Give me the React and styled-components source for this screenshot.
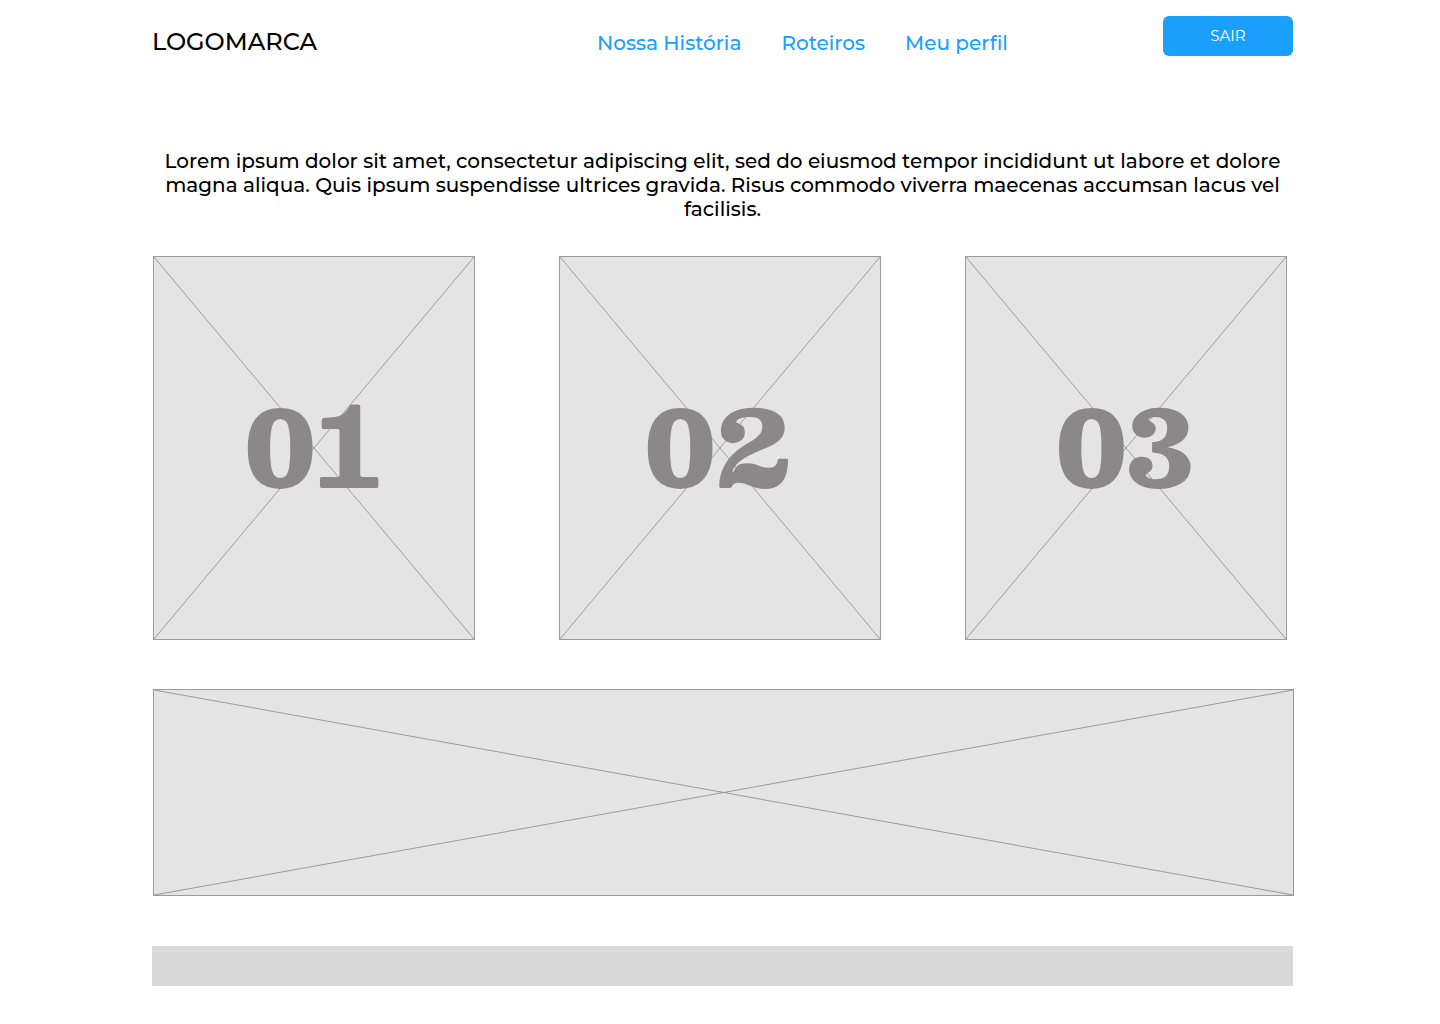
import React from "react";
import styled, { createGlobalStyle } from "styled-components";

const GlobalStyle = createGlobalStyle`
  *, *::before, *::after { box-sizing: border-box; }
  body {
    margin: 0;
    background: #ffffff;
    color: #000000;
    font-family: Montserrat, Inter, "Open Sans", sans-serif;
  }
`;

const Page = styled.div`
  min-height: 100vh;
  padding: 16px 147px 38px 152px;
`;

const Header = styled.header`
  display: grid;
  grid-template-columns: 445px 1fr 130px;
  align-items: start;
`;

const Logo = styled.a`
  padding-top: 10px;
  color: #000000;
  font-size: 24px;
  font-weight: 500;
  line-height: 32px;
  text-decoration: none;
`;

const Nav = styled.nav`
  display: flex;
  gap: 40px;
  padding-top: 15px;
`;

const NavLink = styled.a`
  color: #1aa0fc;
  font-size: 20px;
  font-weight: 500;
  line-height: 24px;
  text-decoration: none;
  white-space: nowrap;
`;

const Button = styled.button`
  height: 40px;
  padding: 0 0 2px;
  border: 0;
  border-radius: 6px;
  background: #1aa0fc;
  color: #ffffff;
  font-family: inherit;
  font-size: 15px;
  cursor: pointer;
`;

const Intro = styled.p`
  margin: 91px 0 35px;
  padding: 0 8px;
  font-size: 20px;
  font-weight: 500;
  line-height: 24px;
  text-align: center;
`;

const Cards = styled.section`
  display: grid;
  grid-template-columns: repeat(3, 1fr);
  gap: 84px;
  padding: 0 6px 0 1px;
`;

const Frame = styled.div`
  display: grid;
  place-items: center;
  height: ${({ $height }) => $height}px;
  border: 1px solid #9c9c9c;
  background: #e4e4e4;
`;

const Cross = styled.svg`
  grid-area: 1 / 1;
  width: 100%;
  height: 100%;
  min-height: 0;
  stroke: #9c9c9c;
`;

const Number = styled.span`
  grid-area: 1 / 1;
  z-index: 1;
  padding: 0 4px 8px 0;
  color: #8b8889;
  font-family: Besley, "DejaVu Serif", serif;
  font-size: 106px;
  font-weight: 900;
  line-height: 1;
`;

const Banner = styled.section`
  margin: 49px -1px 50px 1px;
`;

const Footer = styled.footer`
  height: 40px;
  background: #d9d9d9;
`;

function Placeholder({ height, children }) {
  return (
    <Frame $height={height}>
      <Cross viewBox="0 0 100 100" preserveAspectRatio="none" aria-hidden="true">
        <path d="M0 0 100 100M100 0 0 100" vectorEffect="non-scaling-stroke" />
      </Cross>
      {children}
    </Frame>
  );
}

export default function App() {
  return (
    <>
      <GlobalStyle />
      <Page>
        <Header>
          <Logo href="#">LOGOMARCA</Logo>
          <Nav>
            <NavLink href="#historia">Nossa História</NavLink>
            <NavLink href="#roteiros">Roteiros</NavLink>
            <NavLink href="#perfil">Meu perfil</NavLink>
          </Nav>
          <Button type="button">SAIR</Button>
        </Header>
        <main>
          <Intro>
            Lorem ipsum dolor sit amet, consectetur adipiscing elit, sed do eiusmod
            tempor incididunt ut labore et dolore magna aliqua. Quis ipsum
            suspendisse ultrices gravida. Risus commodo viverra maecenas accumsan
            lacus vel facilisis.
          </Intro>
          <Cards>
            {["01", "02", "03"].map((n) => (
              <Placeholder key={n} height={384}>
                <Number>{n}</Number>
              </Placeholder>
            ))}
          </Cards>
          <Banner>
            <Placeholder height={207} />
          </Banner>
        </main>
        <Footer />
      </Page>
    </>
  );
}
